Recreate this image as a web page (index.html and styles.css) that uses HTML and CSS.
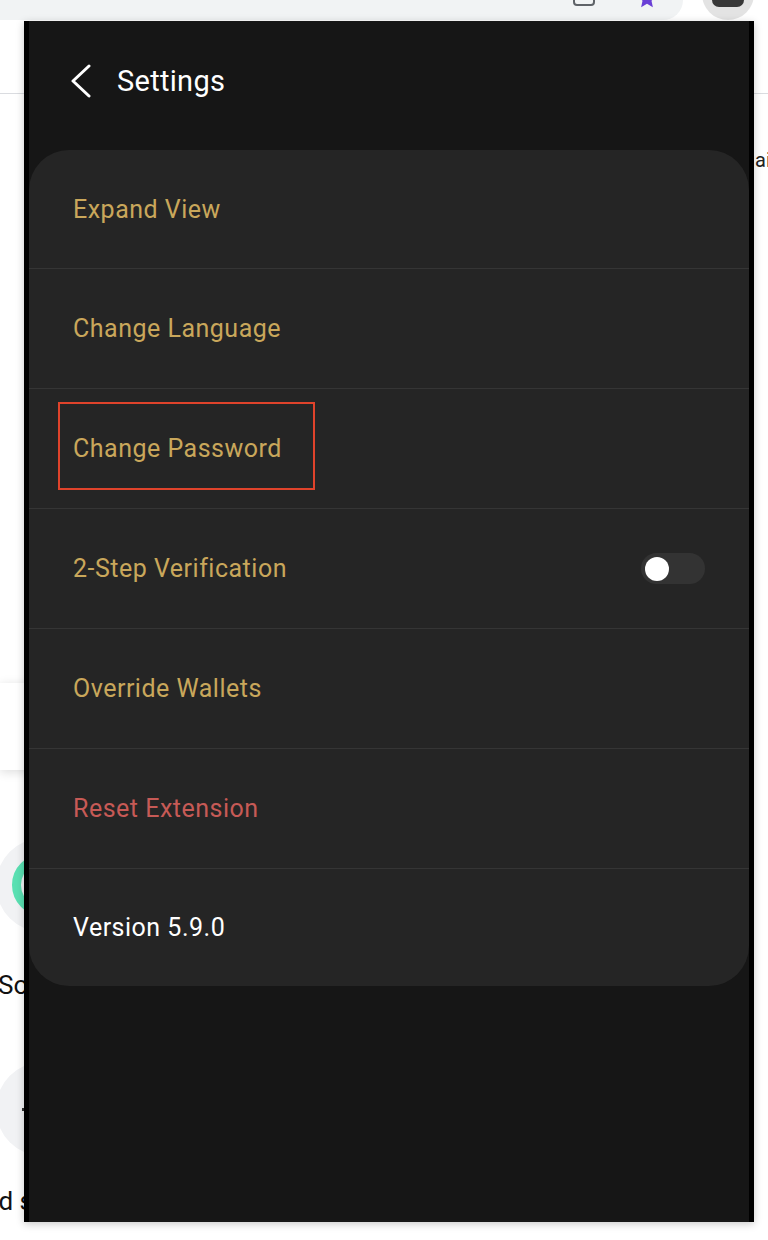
FILE: index.html
```html
<!DOCTYPE html>
<html lang="en">
<head>
<meta charset="utf-8">
<title>Settings</title>
<link rel="stylesheet" href="styles.css">
</head>
<body>
  <div class="toolbar">
    <div class="omnibox">
      <span class="tab-icon"></span>
      <svg class="star" width="22" height="22" viewBox="0 0 24 24"><path d="M12 1.5l3.1 6.6 7.2.8-5.4 4.9 1.5 7.1L12 17.3l-6.4 3.6 1.5-7.1L1.7 8.9l7.2-.8z" fill="#6a3fd6"/></svg>
    </div>
    <div class="ext"><span class="ext-icon"></span></div>
  </div>

  <div class="page">
    <div class="page-top"></div>
    <div class="page-body">
      <div class="col-left">
        <div class="bg-card"></div>
        <div class="bg-circle"><span class="ring"></span></div>
        <div class="bg-text">Solana</div>
        <div class="bg-circle second"><span class="dash"></span></div>
        <div class="bg-text tail">and swap</div>
      </div>
      <div class="col-right">
        <div class="bg-text right">ain</div>
      </div>
    </div>
  </div>

  <div class="popup">
    <header class="popup-header">
      <svg class="back" width="22" height="34" viewBox="0 0 22 34"><path d="M19 2L3 17l16 15" fill="none" stroke="#fff" stroke-width="3" stroke-linecap="round" stroke-linejoin="round"/></svg>
      <h1 class="title">Settings</h1>
    </header>
    <div class="card">
      <div class="row"><span class="label">Expand View</span></div>
      <div class="row"><span class="label">Change Language</span></div>
      <div class="row"><span class="label">Change Password</span></div>
      <div class="row"><span class="label">2-Step Verification</span><span class="switch"><span class="knob"></span></span></div>
      <div class="row"><span class="label">Override Wallets</span></div>
      <div class="row"><span class="label danger">Reset Extension</span></div>
      <div class="row"><span class="label version">Version 5.9.0</span></div>
    </div>
  </div>

  <div class="annotation"></div>
</body>
</html>
```

FILE: styles.css
```css
html, body {
  margin: 0;
  padding: 0;
}

body {
  width: 768px;
  height: 1240px;
  overflow: hidden;
  position: relative;
  background: #ffffff;
  font-family: Roboto, "Liberation Sans", Arial, sans-serif;
}

/* ---------- browser chrome behind ---------- */
.toolbar {
  display: flex;
  height: 20px;
}

.omnibox {
  width: 683px;
  height: 20px;
  background: #f1f3f4;
  border-bottom-right-radius: 20px;
  display: flex;
  justify-content: flex-end;
  align-items: flex-end;
  padding-right: 25px;
  box-sizing: border-box;
}

.tab-icon {
  width: 22px;
  height: 20px;
  box-sizing: border-box;
  border: 2px solid #5f6368;
  border-radius: 4px;
  margin-bottom: 14px;
  margin-right: 41px;
}

.star {
  margin-bottom: 10px;
}

.ext {
  width: 52px;
  height: 52px;
  margin-top: -32px;
  margin-left: 19px;
  border-radius: 50%;
  background: #e3e3e3;
  display: flex;
  justify-content: center;
  align-items: flex-start;
  padding-top: 7px;
  box-sizing: border-box;
}

.ext-icon {
  width: 32px;
  height: 32px;
  border-radius: 7px;
  background: #383838;
}

/* ---------- page behind ---------- */
.page-top {
  height: 73px;
  border-bottom: 1px solid #dadce0;
}

.page-body {
  display: flex;
  justify-content: space-between;
}

.col-left {
  width: 24px;
  overflow: hidden;
  padding-bottom: 20px;
}

.col-right {
  width: 14px;
  overflow: hidden;
}

.bg-card {
  width: 60px;
  height: 87px;
  margin-top: 589px;
  background: #fff;
  box-shadow: 0 2px 10px rgba(0, 0, 0, 0.14);
}

.bg-circle {
  width: 94px;
  height: 94px;
  margin-top: 68px;
  margin-left: -4px;
  border-radius: 50%;
  background: #f1f2f4;
  display: flex;
  align-items: center;
  padding-left: 16px;
  box-sizing: border-box;
}

.ring {
  width: 62px;
  height: 62px;
  box-sizing: border-box;
  border: 9px solid #5ae0b2;
  border-radius: 50%;
}

.bg-circle.second {
  margin-top: 62px;
  padding-left: 26px;
}

.dash {
  width: 8px;
  height: 3px;
  background: #333;
}

.bg-text {
  font-size: 26px;
  line-height: 30px;
  color: #111;
  white-space: nowrap;
  margin-top: 38px;
  margin-left: -2px;
}

.bg-text.tail {
  margin-top: 30px;
  margin-left: -30px;
}

.bg-text.right {
  margin-top: 52px;
  margin-left: 1px;
  font-size: 20px;
  line-height: 28px;
  color: #222;
}

/* ---------- extension popup ---------- */
.popup {
  position: absolute;
  left: 24px;
  top: 21px;
  width: 730px;
  height: 1201px;
  box-sizing: border-box;
  background: #161616;
  border-left: 5px solid #000;
  border-right: 5px solid #000;
  box-shadow: 0 2px 8px rgba(0, 0, 0, 0.22);
}

.popup-header {
  height: 120px;
  display: flex;
  align-items: center;
  padding-left: 41px;
  gap: 25px;
}

.back {
  display: block;
}

.title {
  margin: 0;
  font-size: 29px;
  font-weight: 400;
  color: #ffffff;
  letter-spacing: 0.3px;
}

.card {
  margin-top: 9px;
  background: #252525;
  border-radius: 40px;
  overflow: hidden;
}

.row {
  height: 120px;
  box-sizing: border-box;
  border-bottom: 1px solid #353535;
  display: flex;
  align-items: center;
  justify-content: space-between;
  padding: 0 44px;
}

.row:first-child {
  height: 119px;
}

.row:last-child {
  height: 117px;
  border-bottom: 0;
}

.label {
  font-size: 25px;
  letter-spacing: 0.5px;
  color: #c9a75b;
}

.label.danger {
  color: #c75a56;
}

.label.version {
  color: #ffffff;
}

.switch {
  width: 64px;
  height: 31px;
  border-radius: 16px;
  background: #333333;
  display: flex;
  align-items: center;
  padding-left: 4px;
  box-sizing: border-box;
}

.knob {
  width: 24px;
  height: 24px;
  border-radius: 50%;
  background: #ffffff;
}

/* ---------- red annotation box ---------- */
.annotation {
  position: absolute;
  left: 58px;
  top: 402px;
  width: 257px;
  height: 88px;
  box-sizing: border-box;
  border: 2px solid #e0432b;
}
```
